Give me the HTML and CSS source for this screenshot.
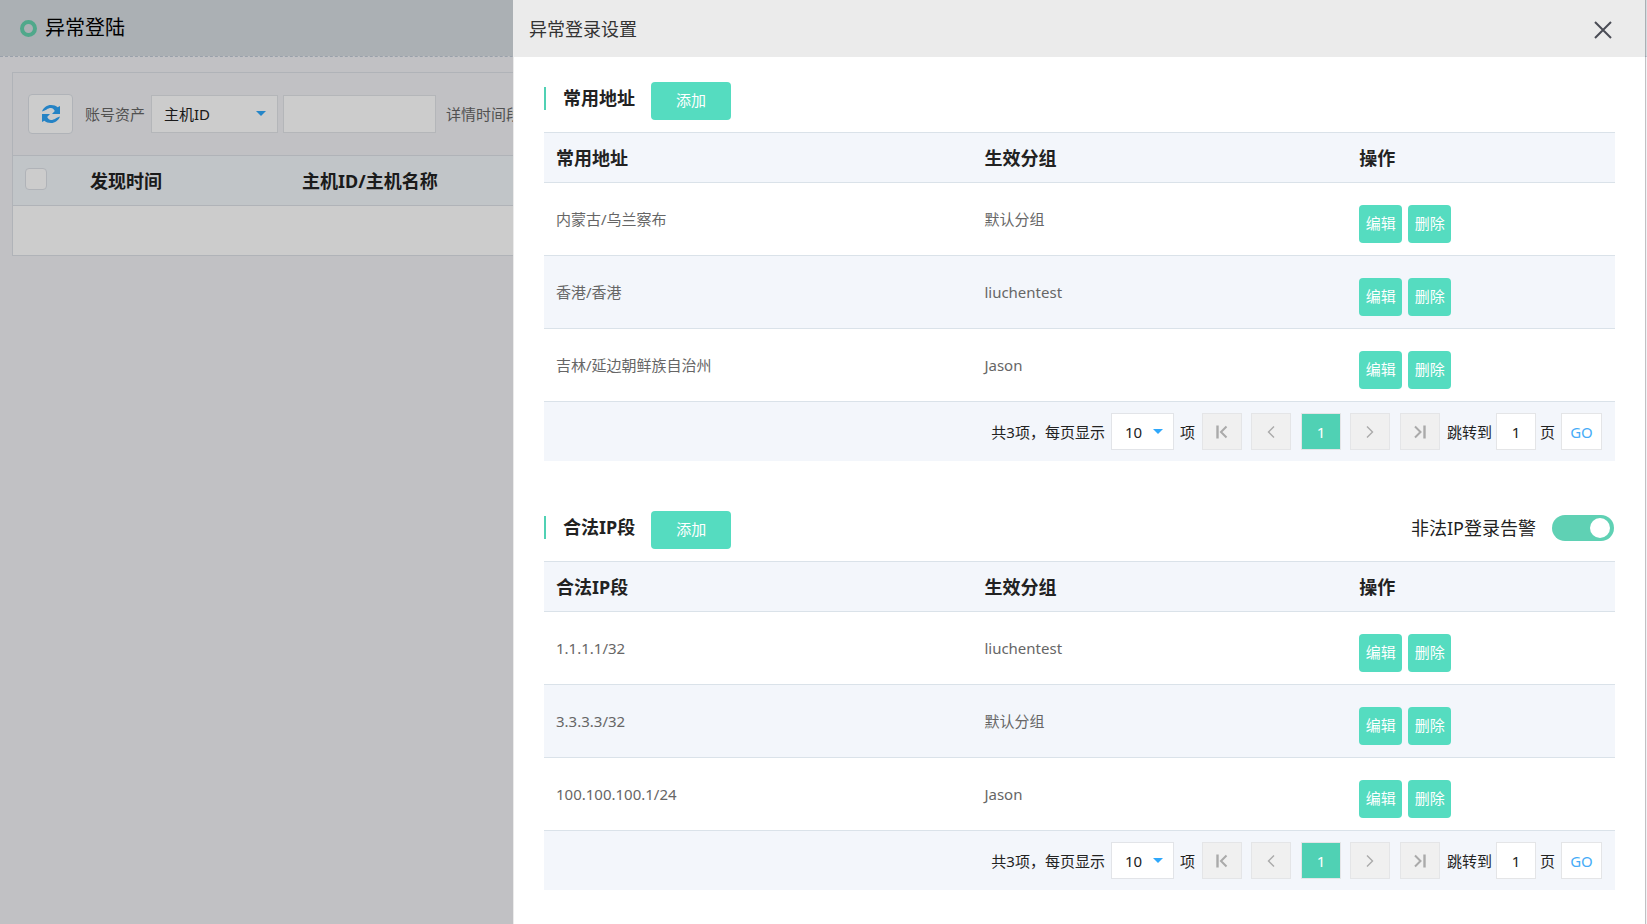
FILE: index.html
```html
<!DOCTYPE html>
<html lang="zh-CN">
<head>
<meta charset="utf-8">
<title>异常登陆</title>
<link rel="stylesheet" href="styles.css">
</head>
<body>
<svg class="defs" aria-hidden="true">
  <symbol id="first" viewBox="0 0 14 14"><path d="M2.500 0.500v13" stroke-width="2.400"/><path d="M11.500 1.500L6 7l5.500 5.500" stroke-width="2"/></symbol>
  <symbol id="prev" viewBox="0 0 14 14"><path d="M10 1.500L4.500 7l5.500 5.500" stroke-width="1.400"/></symbol>
  <symbol id="next" viewBox="0 0 14 14"><path d="M4 1.500L9.500 7L4 12.500" stroke-width="1.400"/></symbol>
  <symbol id="last" viewBox="0 0 14 14"><path d="M11.500 0.500v13" stroke-width="2.400"/><path d="M2 1.500L7.500 7L2 12.500" stroke-width="2"/></symbol>
</svg>

<div class="page">
  <header class="page-header"><span class="ring"></span><h1>异常登陆</h1></header>
  <main class="card">
    <div class="filters">
      <button class="refresh" type="button" aria-label="刷新">
        <svg viewBox="0 0 18 18"><path d="M0 6.500C1.500 2.500 5 0 9 0c2.700 0 5 .8 6.600 2.200L18 1v8h-8l2.800-3C11.800 4 10.600 3 9 3c-3.500 0-5 2.500-9 3.500z"/><path d="M18 11.500C16.500 15.500 13 18 9 18c-2.700 0-5-.8-6.600-2.200L0 17V9h8l-2.800 3c1 2 2.200 3 3.800 3 3.500 0 5-2.500 9-3.500z"/></svg>
      </button>
      <label for="asset">账号资产</label>
      <span class="select-wrap asset"><select id="asset"><option>主机ID</option></select></span>
      <input class="keyword" type="text" aria-label="账号资产关键字">
      <span class="period">详情时间段</span>
    </div>
    <table class="events">
      <thead><tr><th class="check"><input type="checkbox" aria-label="全选"></th><th class="time">发现时间</th><th>主机ID/主机名称</th></tr></thead>
      <tbody><tr><td colspan="3"></td></tr></tbody>
    </table>
  </main>
</div>
<div class="mask"></div>

<aside class="drawer" role="dialog" aria-labelledby="drawer-title">
  <header class="drawer-header">
    <h2 id="drawer-title">异常登录设置</h2>
    <button class="close" type="button" aria-label="关闭"><svg viewBox="0 0 18 18"><path d="M1 1l16 16M17 1L1 17"/></svg></button>
  </header>
  <div class="drawer-body">
    <section>
      <div class="section-head"><h3>常用地址</h3><button class="btn add" type="button">添加</button></div>
      <table class="list">
        <thead><tr><th>常用地址</th><th>生效分组</th><th>操作</th></tr></thead>
        <tbody>
          <tr><td>内蒙古/乌兰察布</td><td>默认分组</td><td><div class="actions"><button class="btn" type="button">编辑</button><button class="btn" type="button">删除</button></div></td></tr>
          <tr><td>香港/香港</td><td>liuchentest</td><td><div class="actions"><button class="btn" type="button">编辑</button><button class="btn" type="button">删除</button></div></td></tr>
          <tr><td>吉林/延边朝鲜族自治州</td><td>Jason</td><td><div class="actions"><button class="btn" type="button">编辑</button><button class="btn" type="button">删除</button></div></td></tr>
        </tbody>
      </table>
      <div class="pager">
        <label for="size1">共3项，每页显示</label>
        <span class="select-wrap size"><select id="size1"><option>10</option></select></span>
        <span>项</span>
        <nav class="pages" aria-label="常用地址分页">
          <button type="button" aria-label="首页"><svg><use href="#first"/></svg></button>
          <button type="button" aria-label="上一页"><svg><use href="#prev"/></svg></button>
          <button type="button" class="current">1</button>
          <button type="button" aria-label="下一页"><svg><use href="#next"/></svg></button>
          <button type="button" aria-label="末页"><svg><use href="#last"/></svg></button>
        </nav>
        <label class="jump">跳转到<input type="text" value="1">页</label>
        <button class="go" type="button">GO</button>
      </div>
    </section>
    <section>
      <div class="section-head"><h3>合法IP段</h3><button class="btn add" type="button">添加</button>
        <label class="alert">非法IP登录告警<input class="switch" type="checkbox" role="switch" checked></label>
      </div>
      <table class="list">
        <thead><tr><th>合法IP段</th><th>生效分组</th><th>操作</th></tr></thead>
        <tbody>
          <tr><td>1.1.1.1/32</td><td>liuchentest</td><td><div class="actions"><button class="btn" type="button">编辑</button><button class="btn" type="button">删除</button></div></td></tr>
          <tr><td>3.3.3.3/32</td><td>默认分组</td><td><div class="actions"><button class="btn" type="button">编辑</button><button class="btn" type="button">删除</button></div></td></tr>
          <tr><td>100.100.100.1/24</td><td>Jason</td><td><div class="actions"><button class="btn" type="button">编辑</button><button class="btn" type="button">删除</button></div></td></tr>
        </tbody>
      </table>
      <div class="pager">
        <label for="size2">共3项，每页显示</label>
        <span class="select-wrap size"><select id="size2"><option>10</option></select></span>
        <span>项</span>
        <nav class="pages" aria-label="合法IP段分页">
          <button type="button" aria-label="首页"><svg><use href="#first"/></svg></button>
          <button type="button" aria-label="上一页"><svg><use href="#prev"/></svg></button>
          <button type="button" class="current">1</button>
          <button type="button" aria-label="下一页"><svg><use href="#next"/></svg></button>
          <button type="button" aria-label="末页"><svg><use href="#last"/></svg></button>
        </nav>
        <label class="jump">跳转到<input type="text" value="1">页</label>
        <button class="go" type="button">GO</button>
      </div>
    </section>
  </div>
</aside>
</body>
</html>
```

FILE: styles.css
```css
* { box-sizing: border-box; }
body {
  margin: 0;
  height: 100vh;
  overflow: hidden;
  background: #f2f2f5;
  color: #222;
  font: 15px/20px "Noto Sans", "Noto Sans CJK SC", sans-serif;
}
h1, h2, h3 { margin: 0; font-weight: 400; }
button, input, select { font: inherit; color: inherit; margin: 0; padding: 0; }
button { cursor: pointer; }
table { width: 100%; border-collapse: separate; border-spacing: 0; table-layout: fixed; }
th, td { text-align: left; }
.defs { display: none; }

/* Page behind the drawer */
.page-header {
  display: flex;
  align-items: center;
  gap: 8px;
  height: 57px;
  padding-left: 20px;
  background: #d6dce1;
  border-bottom: 1px dashed #c0cad6;
  background-clip: padding-box;
}
.page-header h1 { font-size: 20px; line-height: 28px; color: #000; }
.ring { width: 17px; height: 17px; border: 4px solid #65d2ae; border-radius: 50%; }
.card { margin: 15px 12px; border: 1px solid #dce0e7; }
.filters {
  display: flex;
  align-items: center;
  height: 82px;
  padding-left: 15px;
  overflow: hidden;
  white-space: nowrap;
  color: #666;
}
.refresh {
  display: flex;
  align-items: center;
  justify-content: center;
  width: 45px;
  height: 40px;
  margin-right: 12px;
  background: #fff;
  border: 1px solid #dce0e7;
  border-radius: 4px;
}
.refresh svg { width: 18px; height: 18px; fill: #2fa4f7; }
.select-wrap { position: relative; display: block; }
.select-wrap::after {
  content: "";
  position: absolute;
  top: 50%;
  right: 12px;
  margin-top: -3px;
  border: 5px solid transparent;
  border-top-color: #2fa8fb;
  border-bottom: 0;
  pointer-events: none;
}
select {
  appearance: none;
  display: block;
  width: 100%;
  height: 37px;
  padding-left: 12px;
  background: #fff;
  border: 1px solid #e2e4e8;
  border-radius: 0;
  color: #222;
}
.asset { width: 127px; margin: 0 5px 0 6px; }
.keyword { width: 153px; height: 38px; background: #fff; border: 1px solid #e2e4e8; }
.asset select { height: 38px; }
.period { margin-left: 10px; }
.events thead { background: #f2f7fb; }
.events th { height: 51px; padding: 0 12px; border-top: 1px solid #dce0e7; border-bottom: 1px solid #dce0e7; font-size: 18px; }
.events .check { width: 65px; padding-bottom: 3px; }
.events .time { width: 212px; }
.events td { height: 49px; background: #fff; }
.events input {
  appearance: none;
  display: block;
  width: 22px;
  height: 22px;
  background: #fff;
  border: 1px solid #dce0e7;
  border-radius: 4px;
}
.mask { position: fixed; inset: 0 1px 0 0; background: rgba(0, 0, 0, .2); }

/* Drawer */
.drawer {
  position: fixed;
  top: 0;
  left: 513px;
  right: 2px;
  bottom: 0;
  overflow: hidden;
  background: #fff;
  border-left: 1px solid #ebebeb;
}
.drawer-header {
  display: flex;
  align-items: center;
  justify-content: space-between;
  height: 57px;
  padding: 0 33px 0 15px;
  background: #ebebeb;
}
.drawer-header h2 { font-size: 18px; line-height: 24px; color: #333; }
.close { display: flex; margin-top: 3px; background: none; border: 0; }
.close svg { width: 18px; height: 18px; fill: none; stroke: #4a4c55; stroke-width: 2; }
.drawer-body { display: grid; gap: 50px; padding: 25px 30px; }
.section-head { display: flex; align-items: center; height: 38px; margin-bottom: 12px; }
.section-head h3 {
  display: flex;
  align-items: center;
  height: 23px;
  margin: 0 16px 6px 0;
  padding-left: 17px;
  border-left: 2px solid #50d1b4;
  font-size: 18px;
  font-weight: 700;
}
.btn {
  width: 43px;
  height: 38px;
  padding-bottom: 2px;
  background: #55dcc0;
  border: 0;
  border-radius: 4px;
  color: #fff;
}
.btn.add { width: 80px; }
.alert { display: flex; align-items: center; gap: 16px; margin: 0 1px 4px auto; font-size: 18px; }
.switch {
  appearance: none;
  width: 62px;
  height: 26px;
  padding: 3px 4px;
  background: #5fd1b4;
  border-radius: 13px;
}
.switch::before { content: ""; display: block; width: 20px; height: 20px; border-radius: 50%; background: #fff; }
.switch:checked::before { margin-left: auto; }
.list th { height: 50px; padding: 0 12px; background: #f3f6fb; border-top: 1px solid #dae2e9; font-size: 18px; }
.list th:nth-child(1) { width: 40%; }
.list th:nth-child(2) { width: 35%; }
.list td { height: 73px; padding: 11px 12px 12px; border-top: 1px solid #dae2e9; color: #666; }
.list tbody tr:nth-child(even) { background: #f3f6fb; }
.actions { display: flex; gap: 6px; margin-top: 11px; }

.pager {
  display: flex;
  align-items: center;
  justify-content: flex-end;
  gap: 6px;
  height: 60px;
  padding-right: 13px;
  background: #f3f6fb;
  border-top: 1px solid #dae2e9;
}
.size { width: 63px; }
.size select { padding-left: 13px; }
.size.select-wrap::after { right: 11px; }
.pages { display: flex; justify-content: space-between; width: 238px; margin: 0 1px; }
.pages button {
  display: flex;
  align-items: center;
  justify-content: center;
  width: 40px;
  height: 37px;
  background: #f0f0f0;
  border: 1px solid #e4e5e7;
}
.pages .current { background: #50d1b4; color: #fff; }
.pages svg { width: 14px; height: 14px; fill: none; stroke: #aaa; }
.jump { display: flex; align-items: center; gap: 4px; }
.jump input { width: 40px; height: 37px; background: #fff; border: 1px solid #e4e5e7; text-align: center; }
.go { width: 41px; height: 37px; background: #fff; border: 1px solid #e4e5e7; color: #46acf7; }
```
